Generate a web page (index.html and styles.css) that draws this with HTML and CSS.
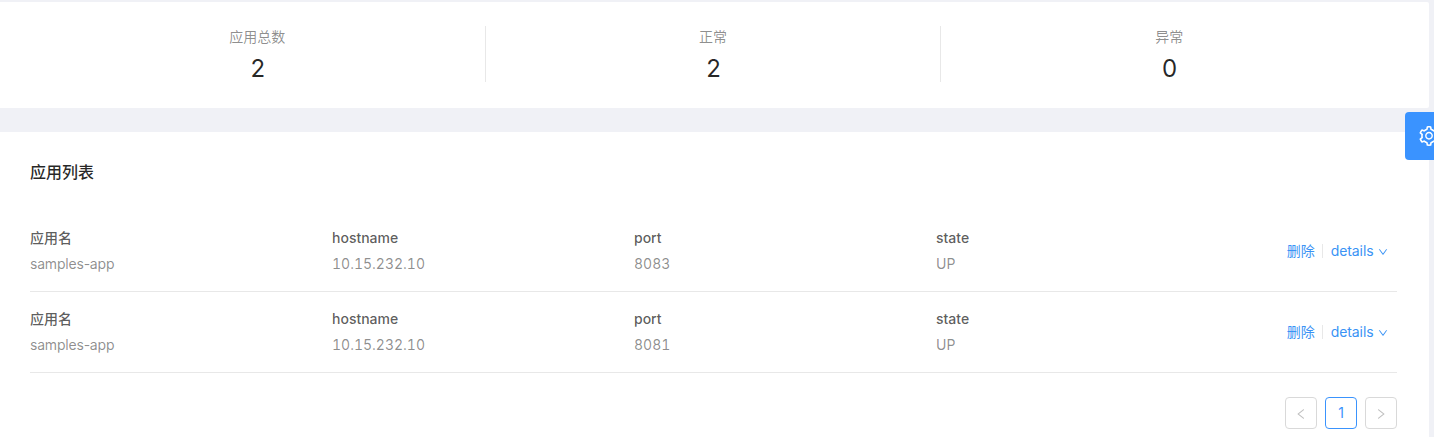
FILE: index.html
```
<!DOCTYPE html>
<html lang="zh-CN">
<head>
<meta charset="utf-8">
<title>应用列表</title>
<link rel="stylesheet" href="styles.css">
</head>
<body>
<svg class="defs" width="0" height="0">
  <symbol id="down" viewBox="64 64 896 896"><path d="M884 256h-75c-5.1 0-9.9 2.5-12.9 6.6L512 654.2 227.9 262.6c-3-4.1-7.8-6.6-12.9-6.6h-75c-6.5 0-10.3 7.4-6.5 12.7l352.6 486.1c12.8 17.6 39 17.6 51.7 0l352.6-486.1c3.9-5.3.1-12.7-6.4-12.7z"/></symbol>
  <symbol id="left" viewBox="64 64 896 896"><path d="M724 218.3V141c0-6.7-7.7-10.4-12.9-6.3L260.3 486.8a31.86 31.86 0 0 0 0 50.3l450.8 352.1c5.3 4.1 12.9.4 12.9-6.3v-77.3c0-4.9-2.3-9.6-6.1-12.6l-360-281 360-281.1c3.8-3 6.1-7.7 6.1-12.6z"/></symbol>
</svg>
<main class="page">
  <section class="card stats">
    <div class="stat"><span class="stat-label">应用总数</span><p class="stat-value">2</p></div>
    <div class="stat"><span class="stat-label">正常</span><p class="stat-value">2</p></div>
    <div class="stat"><span class="stat-label">异常</span><p class="stat-value">0</p></div>
  </section>
  <section class="card apps">
    <h1 class="title">应用列表</h1>
    <ul class="list">
      <li class="item">
        <div class="field"><h4 class="name">应用名</h4><div class="value app">samples-app</div></div>
        <div class="field"><h4 class="name">hostname</h4><div class="value">10.15.232.10</div></div>
        <div class="field"><h4 class="name">port</h4><div class="value">8083</div></div>
        <div class="field"><h4 class="name">state</h4><div class="value">UP</div></div>
        <div class="actions"><a class="link">删除</a><i class="split"></i><a class="link details">details<svg class="down"><use href="#down"/></svg></a></div>
      </li>
      <li class="item">
        <div class="field"><h4 class="name">应用名</h4><div class="value app">samples-app</div></div>
        <div class="field"><h4 class="name">hostname</h4><div class="value">10.15.232.10</div></div>
        <div class="field"><h4 class="name">port</h4><div class="value">8081</div></div>
        <div class="field"><h4 class="name">state</h4><div class="value">UP</div></div>
        <div class="actions"><a class="link">删除</a><i class="split"></i><a class="link details">details<svg class="down"><use href="#down"/></svg></a></div>
      </li>
    </ul>
    <nav class="pager">
      <a class="page-btn"><svg class="arrow"><use href="#left"/></svg></a>
      <a class="page-btn current">1</a>
      <a class="page-btn"><svg class="arrow flip"><use href="#left"/></svg></a>
    </nav>
  </section>
</main>
<div class="drawer-handle">
  <svg class="gear" viewBox="64 64 896 896"><path d="M924.8 625.7l-65.5-56c3.1-19 4.7-38.4 4.7-57.8s-1.6-38.8-4.7-57.8l65.5-56a32.03 32.03 0 0 0 9.3-35.2l-.9-2.6a443.74 443.74 0 0 0-79.7-137.9l-1.8-2.1a32.12 32.12 0 0 0-35.1-9.5l-81.3 28.9c-30-24.6-63.5-44-99.7-57.6l-15.7-85a32.05 32.05 0 0 0-25.8-25.7l-2.7-.5c-52.1-9.4-106.9-9.4-159 0l-2.7.5a32.05 32.05 0 0 0-25.8 25.7l-15.8 85.4a351.86 351.86 0 0 0-99 57.4l-81.9-29.1a32 32 0 0 0-35.1 9.5l-1.8 2.1a446.02 446.02 0 0 0-79.7 137.9l-.9 2.6c-4.5 12.5-.8 26.5 9.3 35.2l66.3 56.6c-3.1 18.8-4.6 38-4.6 57.1 0 19.2 1.5 38.4 4.6 57.1L99 625.5a32.03 32.03 0 0 0-9.3 35.2l.9 2.6c18.1 50.4 44.9 96.9 79.7 137.9l1.8 2.1a32.12 32.12 0 0 0 35.1 9.5l81.9-29.1c29.8 24.5 63.1 43.9 99 57.4l15.8 85.4a32.05 32.05 0 0 0 25.8 25.7l2.7.5a449.4 449.4 0 0 0 159 0l2.7-.5a32.05 32.05 0 0 0 25.8-25.7l15.7-85a350 350 0 0 0 99.7-57.6l81.3 28.9a32 32 0 0 0 35.1-9.5l1.8-2.1c34.8-41.1 61.6-87.5 79.7-137.9l.9-2.6c4.5-12.3.8-26.3-9.3-35zM788.3 465.9c2.5 15.1 3.8 30.6 3.8 46.1s-1.3 31-3.8 46.1l-6.6 40.1 74.7 63.9a370.03 370.03 0 0 1-42.6 73.6L721 702.8l-31.4 25.8c-23.9 19.6-50.5 35-79.3 45.8l-38.1 14.3-17.9 97a377.5 377.5 0 0 1-85 0l-17.9-97.2-37.8-14.5c-28.5-10.8-55-26.2-78.7-45.7l-31.4-25.9-93.4 33.2c-17-22.9-31.2-47.6-42.6-73.6l75.5-64.5-6.5-40c-2.4-14.9-3.7-30.3-3.7-45.5 0-15.3 1.2-30.6 3.7-45.5l6.5-40-75.5-64.5c11.3-26.1 25.6-50.7 42.6-73.6l93.4 33.2 31.4-25.9c23.7-19.5 50.2-34.9 78.7-45.7l37.9-14.3 17.9-97.2c28.1-3.2 56.8-3.2 85 0l17.9 97 38.1 14.3c28.7 10.8 55.4 26.2 79.3 45.8l31.4 25.8 92.8-32.9c17 22.9 31.2 47.6 42.6 73.6L781.8 426l6.5 39.9zM512 326c-97.2 0-176 78.8-176 176s78.8 176 176 176 176-78.8 176-176-78.8-176-176-176zm79.2 255.2A111.6 111.6 0 0 1 512 614c-29.9 0-58-11.7-79.2-32.8A111.6 111.6 0 0 1 400 502c0-29.9 11.7-58 32.8-79.2C454 401.6 482.1 390 512 390c29.9 0 58 11.6 79.2 32.8A111.6 111.6 0 0 1 624 502c0 29.9-11.7 58-32.8 79.2z"/></svg>
</div>
</body>
</html>
```
FILE: styles.css
```
* { box-sizing: border-box; margin: 0; padding: 0; }
body {
  height: 437px;
  overflow: hidden;
  background: #f0f1f6;
  font: 14px/22px Inter, "Noto Sans CJK SC", sans-serif;
  color: rgba(0, 0, 0, .65);
}
.defs { position: absolute; }
.page { padding: 2px 5px 0 0; display: flex; flex-direction: column; gap: 24px; }
.card { background: #fff; border-radius: 0 2px 2px 0; }
.stats { display: grid; grid-template-columns: repeat(3, 1fr); height: 106px; padding: 24px 32px 26px 30px; }
.stat { text-align: center; border-right: 1px solid #e8e8e8; }
.stat:last-child { border-right: 0; }
.stat-label { display: block; color: rgba(0, 0, 0, .45); }
.stat-value { margin-top: 8px; padding-left: 1px; font-size: 24px; line-height: 26px; color: rgba(0, 0, 0, .85); }
.apps { height: 305px; padding: 28px 32px 0 30px; border-radius: 0 2px 0 0; }
.title { font-size: 16px; line-height: 24px; font-weight: 500; color: rgba(0, 0, 0, .85); }
.list { list-style: none; padding-top: 27px; }
.item { display: flex; height: 81px; padding-top: 16px; border-bottom: 1px solid #e8e8e8; }
.field { width: 302px; flex: none; }
.name { font-size: 14px; font-weight: 500; margin-bottom: 4px; }
.value { color: rgba(0, 0, 0, .45); font-variant-numeric: tabular-nums; }
.app { font-variant-numeric: normal; letter-spacing: -.2px; }
.actions { flex: 1; display: flex; align-items: center; justify-content: flex-end; height: 48px; padding-right: 9px; color: #3a93f5; }
.split { width: 1px; height: 14px; margin: 0 8px 0 7px; background: #e8e8e8; }
.details { display: flex; align-items: center; gap: 4.5px; letter-spacing: -.08px; }
.down { width: 10px; height: 10px; margin-top: 2px; fill: currentColor; }
.pager { display: flex; justify-content: flex-end; gap: 8px; margin-top: 24px; }
.page-btn { display: flex; align-items: center; justify-content: center; width: 32px; height: 32px; border: 1px solid #d9d9d9; border-radius: 4px; color: rgba(0, 0, 0, .25); }
.current { border-color: #3a93fd; color: #3a93fd; }
.arrow { width: 12px; height: 12px; margin-top: 2px; fill: currentColor; }
.flip { transform: scaleX(-1); }
.drawer-handle { position: absolute; top: 112px; left: 1405px; width: 29px; height: 48px; padding: 14px 0 0 14px; background: #3a93ff; border-radius: 4px 0 0 4px; overflow: hidden; }
.gear { display: block; width: 20px; height: 20px; fill: #fff; }
```
